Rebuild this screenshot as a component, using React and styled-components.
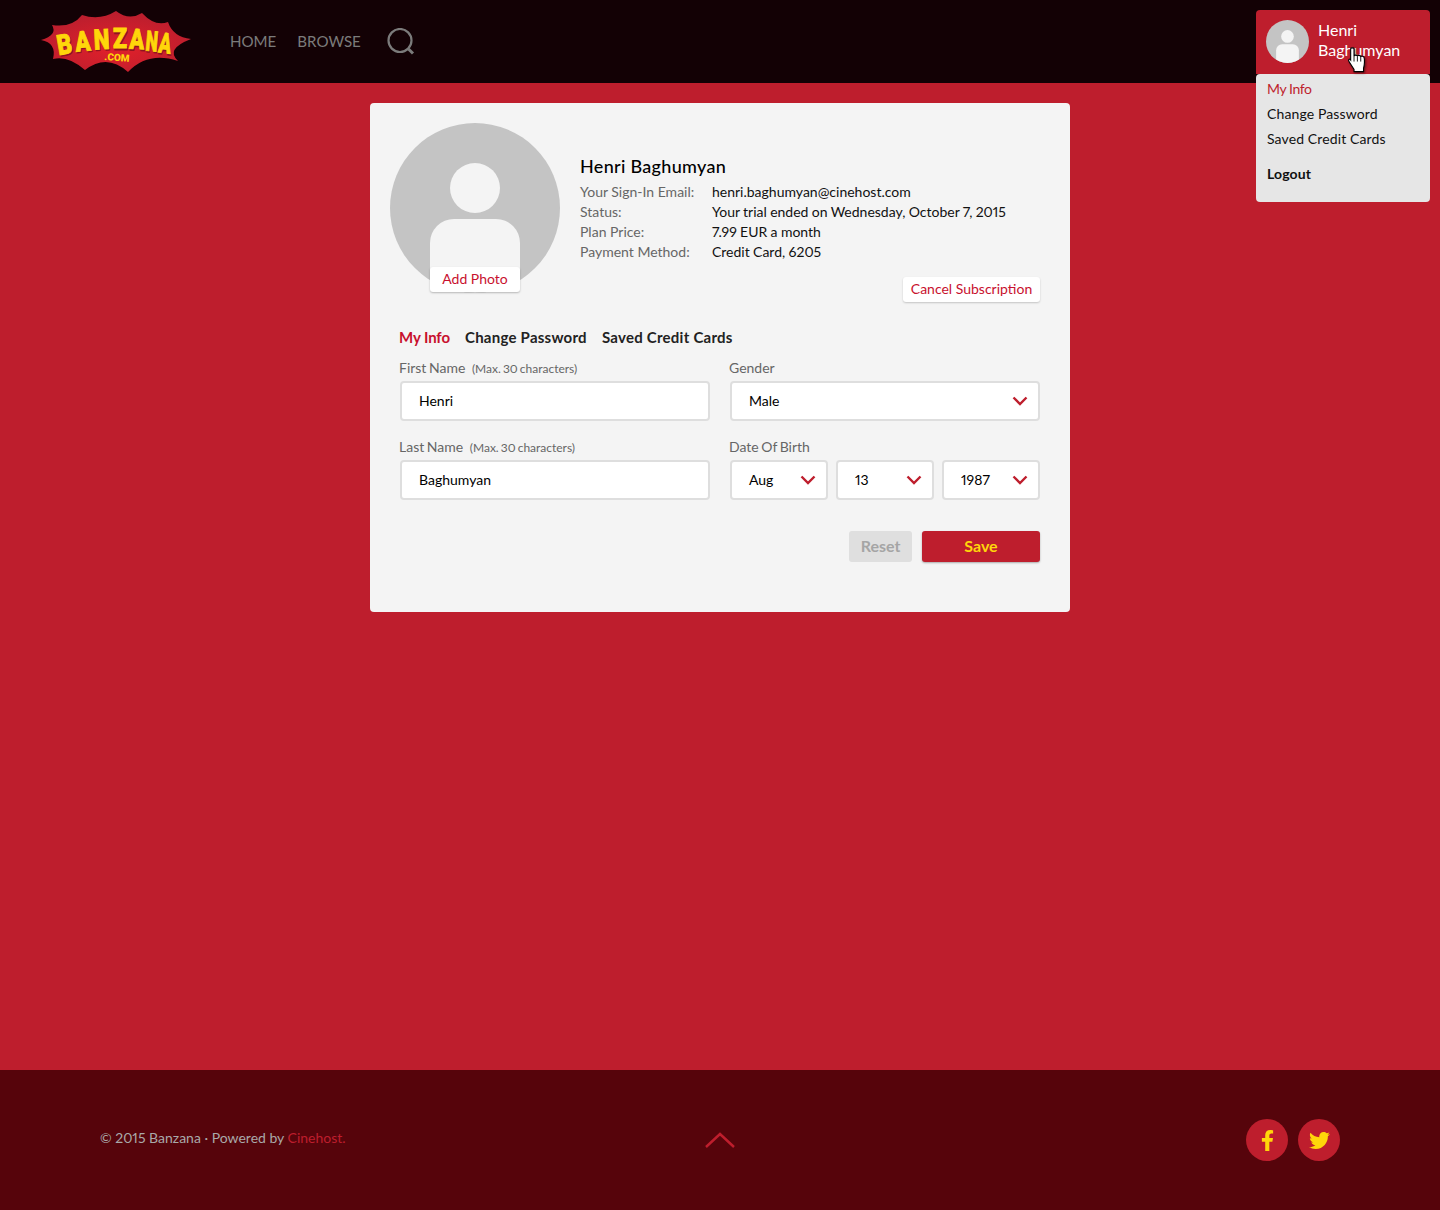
import styled, { createGlobalStyle } from "styled-components";
import { FaFacebookF, FaTwitter } from "react-icons/fa";

const RED = "#be1e2d";
const FONT = `Lato, "Open Sans", "Liberation Sans", sans-serif`;

const GlobalStyle = createGlobalStyle`
    * {
        box-sizing: border-box;
    }

    body {
        margin: 0;
        background-color: ${RED};
        font-family: ${FONT};
        font-size: 14px;
        font-variant-numeric: proportional-nums;
        color: #000;
    }
`;

const Page = styled.div`
    position: relative;
    min-height: 1210px;
    display: flex;
    flex-direction: column;
`;

const Header = styled.header`
    height: 83px;
    padding-left: 40px;
    display: flex;
    align-items: center;
    background-color: #130105;
`;

const Nav = styled.nav`
    margin-left: 38px;
    display: flex;
    align-items: center;
    gap: 21px;

    a {
        margin-top: -2px;
        font-size: 15.1px;
        color: #7b7b7b;
        text-decoration: none;
    }

    svg {
        margin-left: 5px;
        display: block;
    }
`;

const UserMenu = styled.div`
    position: absolute;
    top: 10px;
    right: 10px;
    width: 174px;
`;

const UserHead = styled.div`
    height: 64px;
    padding: 10px 10px 0;
    display: flex;
    gap: 9px;
    background-color: ${RED};
    border-radius: 4px 4px 0 0;
    color: #fff;
    font-size: 16px;
    line-height: 20px;

    svg {
        flex: none;
        display: block;
    }
`;

const MenuList = styled.ul`
    height: 128px;
    margin: 0;
    padding: 2px 11px 0;
    list-style: none;
    background-color: #e6e6e6;
    border-radius: 4px;
`;

const MenuItem = styled.li`
    height: 25px;
    line-height: 25px;
    color: ${(props) => (props.$active ? RED : "#111")};
    font-weight: ${(props) => (props.$bold ? 700 : 400)};
    letter-spacing: ${(props) => (props.$active ? "-0.4px" : "0.12px")};
    margin-top: ${(props) => (props.$bold ? "10px" : 0)};
`;

const Cursor = styled.svg`
    position: absolute;
    top: 37px;
    left: 91px;
    filter: drop-shadow(1px 1px 1px rgba(0, 0, 0, 0.5));
`;

const Main = styled.main`
    flex: 1;
    padding-top: 20px;
`;

const Card = styled.section`
    width: 700px;
    margin: 0 auto;
    padding: 20px 30px 50px 20px;
    background-color: #f4f4f4;
    border-radius: 4px;
`;

const Top = styled.div`
    display: flex;
    gap: 20px;
`;

const AvatarBox = styled.div`
    position: relative;
    flex: none;
    width: 170px;
    height: 170px;

    svg {
        display: block;
    }
`;

const AddPhoto = styled.button`
    position: absolute;
    left: 40px;
    top: 144px;
    width: 90px;
    height: 25px;
    padding: 0 0 2px;
    border: 0;
    border-radius: 3px;
    background-color: #fff;
    box-shadow: 0 1px 2px rgba(0, 0, 0, 0.25);
    color: #c8102e;
    font: inherit;
`;

const Info = styled.div`
    flex: 1;
    padding-top: 31px;
    display: flex;
    flex-direction: column;
`;

const Name = styled.h2`
    margin: 0;
    font-size: 18px;
    line-height: 24px;
    font-weight: 500;
    letter-spacing: 0.3px;
`;

const Details = styled.dl`
    margin: 4px 0 0;
    display: grid;
    grid-template-columns: 132px 1fr;
    grid-auto-rows: 20px;
    line-height: 20px;

    dt {
        color: #666;
    }

    dd {
        margin: 0;
        color: #111;
        word-spacing: -0.25px;
    }
`;

const CancelButton = styled.button`
    align-self: flex-end;
    margin-top: 15px;
    width: 137px;
    height: 25px;
    padding: 0 0 2px;
    border: 0;
    border-radius: 3px;
    background-color: #fff;
    box-shadow: 0 1px 2px rgba(0, 0, 0, 0.2);
    color: #c8102e;
    font: inherit;
`;

const Tabs = styled.div`
    margin: 25px 0 0 9px;
    display: flex;
    gap: 15px;
    font-size: 15px;
    line-height: 20px;
    font-weight: 700;
`;

const Tab = styled.span`
    color: ${(props) => (props.$active ? "#c8102e" : "#222")};
    letter-spacing: ${(props) => (props.$active ? "-0.1px" : "0.25px")};
`;

const FormGrid = styled.form`
    margin: 11px 0 0 9px;
    display: grid;
    grid-template-columns: 311px 311px;
    column-gap: 19px;
    row-gap: 16px;
`;

const Label = styled.div`
    height: 20px;
    margin-bottom: 3px;
    line-height: 20px;
    color: #666;
    word-spacing: -1px;

    small {
        margin-left: 4px;
        font-size: 12px;
    }
`;

const TextInput = styled.input`
    display: block;
    width: 310px;
    height: 40px;
    margin-left: 1px;
    padding: 0 17px 2px;
    border: 2px solid #dedede;
    border-radius: 4px;
    background-color: #fff;
    color: #000;
    font: inherit;
    outline: none;
`;

const SelectRow = styled.div`
    margin-left: 1px;
    display: flex;
    gap: 8px;
`;

const Select = styled.div`
    flex: 1;
    height: 40px;
    padding: 0 10px 2px 17px;
    display: flex;
    align-items: center;
    justify-content: space-between;
    border: 2px solid #dedede;
    border-radius: 4px;
    background-color: #fff;

    svg {
        margin-top: 2px;
    }
`;

const Actions = styled.div`
    margin-top: 31px;
    display: flex;
    justify-content: flex-end;
    gap: 10px;
`;

const ActionButton = styled.button`
    width: ${(props) => (props.$primary ? "118px" : "63px")};
    height: 31px;
    padding: 0 0 2px;
    border: 0;
    border-radius: 3px;
    background-color: ${(props) => (props.$primary ? RED : "#dfdfdf")};
    box-shadow: ${(props) =>
        props.$primary ? "0 1px 2px rgba(0, 0, 0, 0.3)" : "none"};
    color: ${(props) => (props.$primary ? "#ffd60a" : "#a5a5a5")};
    font: inherit;
    font-size: 16px;
    font-weight: 700;
`;

const Footer = styled.footer`
    height: 140px;
    padding: 0 100px;
    display: grid;
    grid-template-columns: 1fr auto 1fr;
    align-items: center;
    background-color: #56040b;
`;

const Copyright = styled.div`
    color: #a9a9a9;
    margin-top: -6px;

    a {
        color: ${RED};
        text-decoration: none;
    }
`;

const Socials = styled.div`
    display: flex;
    justify-content: flex-end;
    gap: 10px;
`;

const Social = styled.a`
    width: 42px;
    height: 42px;
    display: flex;
    align-items: center;
    justify-content: center;
    border-radius: 50%;
    background-color: ${RED};
    color: #ffd60a;
    font-size: 21px;
`;

const LOGO_LETTERS = [
    { ch: "B", x: 66, y: 55, r: -10, sx: 0.82 },
    { ch: "A", x: 83.5, y: 52, r: -5, sx: 0.8 },
    { ch: "N", x: 102, y: 50, r: -3, sx: 0.8 },
    { ch: "Z", x: 120, y: 49, r: 0, sx: 0.82 },
    { ch: "A", x: 136.5, y: 50, r: 3, sx: 0.78 },
    { ch: "N", x: 151, y: 52, r: 5, sx: 0.62 },
    { ch: "A", x: 164, y: 54, r: 8, sx: 0.66 },
];

const BURST =
    "M41 41 Q58 36 52 26 Q72 29 82 16 Q100 22 116 12 Q129 22 142 14 Q155 28 168 23 Q173 38 191 40 Q165 50 178 62 Q148 52 128 73 Q107 54 85 71 Q68 56 53 60 Q57 44 41 41 Z";

const Logo = () => (
    <svg width="152" height="63" viewBox="40 11 152 63">
        <defs>
            <radialGradient id="burst-fill" cx="50%" cy="60%" r="60%">
                <stop offset="0%" stopColor="#e2202a" />
                <stop offset="100%" stopColor="#b91e2e" />
            </radialGradient>
        </defs>
        <path d={BURST} fill="url(#burst-fill)" />
        {LOGO_LETTERS.map((l, i) => (
            <g
                key={i}
                transform={`translate(${l.x} ${l.y}) rotate(${l.r}) scale(${l.sx} 1)`}
                fontFamily="Roboto, sans-serif"
                fontWeight="900"
                fontSize="28"
                textAnchor="middle"
            >
                <text x="1" y="1.5" fill="#8f1420" stroke="#8f1420" strokeWidth="0.9">
                    {l.ch}
                </text>
                <text fill="#ffd60a" stroke="#ffd60a" strokeWidth="0.9">
                    {l.ch}
                </text>
            </g>
        ))}
        <text
            x="117"
            y="62"
            fontFamily="Roboto, sans-serif"
            fontWeight="900"
            fontSize="10"
            textAnchor="middle"
            fill="#ffd60a"
            transform="rotate(4 117 58)"
        >
            .COM
        </text>
    </svg>
);

const SearchIcon = () => (
    <svg width="28" height="28" viewBox="0 0 28 28" fill="none">
        <circle cx="13" cy="12.5" r="11.5" stroke="#7b7b7b" strokeWidth="2.2" />
        <path d="M21.5 21 L26 25.5" stroke="#7b7b7b" strokeWidth="3" />
    </svg>
);

const Avatar = ({ size, clipId }) => (
    <svg width={size} height={size} viewBox="0 0 170 170">
        <clipPath id={clipId}>
            <circle cx="85" cy="85" r="85" />
        </clipPath>
        <circle cx="85" cy="85" r="85" fill="#c4c4c4" />
        <circle cx="85" cy="65" r="25" fill="#f4f4f4" />
        <path
            d="M40 170 V120 a24 24 0 0 1 24 -24 H106 a24 24 0 0 1 24 24 V170 Z"
            fill="#f4f4f4"
            clipPath={`url(#${clipId})`}
        />
    </svg>
);

const Chevron = () => (
    <svg width="16" height="10" viewBox="0 0 16 10" fill="none">
        <path d="M1.5 1.5 L8 8 L14.5 1.5" stroke={RED} strokeWidth="2.4" />
    </svg>
);

const HandCursor = () => (
    <Cursor width="23" height="28" viewBox="0 0 20 25">
        <path
            d="M3 1.5 C3 0.5 6 0.5 6 1.5 V8 C6.5 7 8.5 7 9 8 C9.5 7.2 11.5 7.2 12 8.5 C12.5 8 14.5 8 15 9.5 C15.5 11 15.5 16 14.5 19 V22 H6 V20 L1.5 13 C0.5 11.5 2 10 3 11.5 Z"
            fill="#fff"
            stroke="#000"
            strokeWidth="1"
        />
        <path d="M6 8 V13 M9 8.5 V13 M12 9 V13" stroke="#000" strokeWidth="0.8" />
    </Cursor>
);

const details = [
    ["Your Sign-In Email:", "henri.baghumyan@cinehost.com"],
    ["Status:", "Your trial ended on Wednesday, October 7, 2015"],
    ["Plan Price:", "7.99 EUR a month"],
    ["Payment Method:", "Credit Card, 6205"],
];

const App = () => {
    return (
        <Page>
            <GlobalStyle />
            <Header>
                <Logo />
                <Nav>
                    <a href="#home">HOME</a>
                    <a href="#browse">BROWSE</a>
                    <SearchIcon />
                </Nav>
            </Header>

            <UserMenu>
                <UserHead>
                    <Avatar size={43} clipId="avatar-small" />
                    <div>
                        Henri
                        <br />
                        Baghumyan
                    </div>
                </UserHead>
                <HandCursor />
                <MenuList>
                    <MenuItem $active>My Info</MenuItem>
                    <MenuItem>Change Password</MenuItem>
                    <MenuItem>Saved Credit Cards</MenuItem>
                    <MenuItem $bold>Logout</MenuItem>
                </MenuList>
            </UserMenu>

            <Main>
                <Card>
                    <Top>
                        <AvatarBox>
                            <Avatar size={170} clipId="avatar-big" />
                            <AddPhoto type="button">Add Photo</AddPhoto>
                        </AvatarBox>
                        <Info>
                            <Name>Henri Baghumyan</Name>
                            <Details>
                                {details.map(([label, value]) => (
                                    <div key={label} style={{ display: "contents" }}>
                                        <dt>{label}</dt>
                                        <dd>{value}</dd>
                                    </div>
                                ))}
                            </Details>
                            <CancelButton type="button">
                                Cancel Subscription
                            </CancelButton>
                        </Info>
                    </Top>

                    <Tabs>
                        <Tab $active>My Info</Tab>
                        <Tab>Change Password</Tab>
                        <Tab>Saved Credit Cards</Tab>
                    </Tabs>

                    <FormGrid>
                        <div>
                            <Label>
                                First Name <small>(Max. 30 characters)</small>
                            </Label>
                            <TextInput defaultValue="Henri" />
                        </div>
                        <div>
                            <Label>Gender</Label>
                            <SelectRow>
                                <Select>
                                    Male
                                    <Chevron />
                                </Select>
                            </SelectRow>
                        </div>
                        <div>
                            <Label>
                                Last Name <small>(Max. 30 characters)</small>
                            </Label>
                            <TextInput defaultValue="Baghumyan" />
                        </div>
                        <div>
                            <Label>Date Of Birth</Label>
                            <SelectRow>
                                {["Aug", "13", "1987"].map((value) => (
                                    <Select key={value}>
                                        {value}
                                        <Chevron />
                                    </Select>
                                ))}
                            </SelectRow>
                        </div>
                    </FormGrid>

                    <Actions>
                        <ActionButton type="button">Reset</ActionButton>
                        <ActionButton type="button" $primary>
                            Save
                        </ActionButton>
                    </Actions>
                </Card>
            </Main>

            <Footer>
                <Copyright>
                    © 2015 Banzana · Powered by <a href="#cinehost">Cinehost.</a>
                </Copyright>
                <svg width="30" height="16" viewBox="0 0 30 16" fill="none">
                    <path d="M1 15 L15 2 L29 15" stroke={RED} strokeWidth="2.4" />
                </svg>
                <Socials>
                    <Social href="#facebook">
                        <FaFacebookF />
                    </Social>
                    <Social href="#twitter">
                        <FaTwitter />
                    </Social>
                </Socials>
            </Footer>
        </Page>
    );
};

export default App;
